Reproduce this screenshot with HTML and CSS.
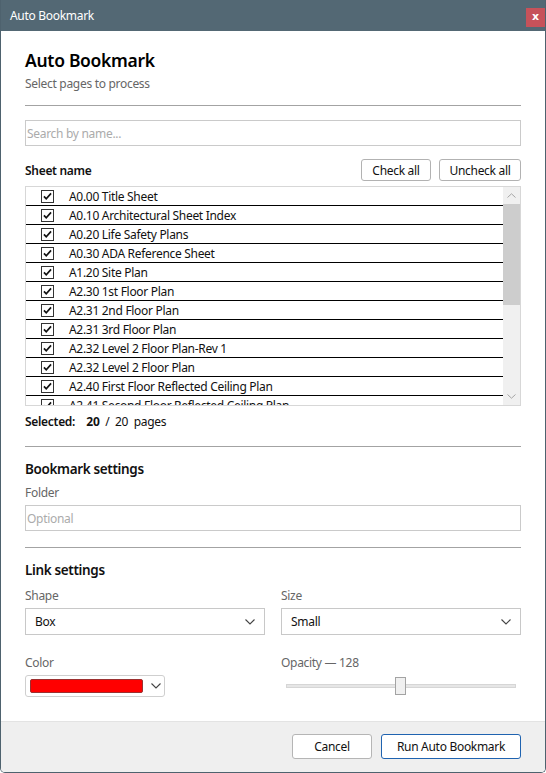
FILE: index.html
```html
<!DOCTYPE html>
<html>
<head>
<meta charset="utf-8">
<title>Auto Bookmark</title>
<link rel="stylesheet" href="styles.css">
</head>
<body>
<div class="window">
  <div class="titlebar">
    <span class="wtitle">Auto Bookmark</span>
    <span class="close">x</span>
  </div>
  <div class="content">
    <h1 class="heading">Auto Bookmark</h1>
    <p class="sub">Select pages to process</p>
    <div class="divider"></div>
    <div class="field search"><span class="ph">Search by name...</span></div>
    <div class="listhead">
      <span class="colname">Sheet name</span>
      <div class="btns">
        <button class="btn btn-check">Check all</button>
        <button class="btn btn-uncheck">Uncheck all</button>
      </div>
    </div>
    <div class="list">
      <div class="rows">
        <div class="row"><span class="cb"><svg viewBox="0 0 13 13" width="11" height="11"><path d="M2.3 6.3 L5 9.2 L10.7 2.8" fill="none" stroke="#111" stroke-width="2"/></svg></span><span>A0.00 Title Sheet</span></div>
        <div class="row"><span class="cb"><svg viewBox="0 0 13 13" width="11" height="11"><path d="M2.3 6.3 L5 9.2 L10.7 2.8" fill="none" stroke="#111" stroke-width="2"/></svg></span><span>A0.10 Architectural Sheet Index</span></div>
        <div class="row"><span class="cb"><svg viewBox="0 0 13 13" width="11" height="11"><path d="M2.3 6.3 L5 9.2 L10.7 2.8" fill="none" stroke="#111" stroke-width="2"/></svg></span><span>A0.20 Life Safety Plans</span></div>
        <div class="row"><span class="cb"><svg viewBox="0 0 13 13" width="11" height="11"><path d="M2.3 6.3 L5 9.2 L10.7 2.8" fill="none" stroke="#111" stroke-width="2"/></svg></span><span>A0.30 ADA Reference Sheet</span></div>
        <div class="row"><span class="cb"><svg viewBox="0 0 13 13" width="11" height="11"><path d="M2.3 6.3 L5 9.2 L10.7 2.8" fill="none" stroke="#111" stroke-width="2"/></svg></span><span>A1.20 Site Plan</span></div>
        <div class="row"><span class="cb"><svg viewBox="0 0 13 13" width="11" height="11"><path d="M2.3 6.3 L5 9.2 L10.7 2.8" fill="none" stroke="#111" stroke-width="2"/></svg></span><span>A2.30 1st Floor Plan</span></div>
        <div class="row"><span class="cb"><svg viewBox="0 0 13 13" width="11" height="11"><path d="M2.3 6.3 L5 9.2 L10.7 2.8" fill="none" stroke="#111" stroke-width="2"/></svg></span><span>A2.31 2nd Floor Plan</span></div>
        <div class="row"><span class="cb"><svg viewBox="0 0 13 13" width="11" height="11"><path d="M2.3 6.3 L5 9.2 L10.7 2.8" fill="none" stroke="#111" stroke-width="2"/></svg></span><span>A2.31 3rd Floor Plan</span></div>
        <div class="row"><span class="cb"><svg viewBox="0 0 13 13" width="11" height="11"><path d="M2.3 6.3 L5 9.2 L10.7 2.8" fill="none" stroke="#111" stroke-width="2"/></svg></span><span>A2.32 Level 2 Floor Plan-Rev 1</span></div>
        <div class="row"><span class="cb"><svg viewBox="0 0 13 13" width="11" height="11"><path d="M2.3 6.3 L5 9.2 L10.7 2.8" fill="none" stroke="#111" stroke-width="2"/></svg></span><span>A2.32 Level 2 Floor Plan</span></div>
        <div class="row"><span class="cb"><svg viewBox="0 0 13 13" width="11" height="11"><path d="M2.3 6.3 L5 9.2 L10.7 2.8" fill="none" stroke="#111" stroke-width="2"/></svg></span><span>A2.40 First Floor Reflected Ceiling Plan</span></div>
        <div class="row"><span class="cb"><svg viewBox="0 0 13 13" width="11" height="11"><path d="M2.3 6.3 L5 9.2 L10.7 2.8" fill="none" stroke="#111" stroke-width="2"/></svg></span><span>A2.41 Second Floor Reflected Ceiling Plan</span></div>
      </div>
      <div class="scrollbar">
        <div class="sb-arrow"><svg viewBox="0 0 9 5" width="9" height="5"><path d="M0.5 4.5 L4.5 0.8 L8.5 4.5" fill="none" stroke="#a6a6a6" stroke-width="1"/></svg></div>
        <div class="sb-thumb"></div>
        <div class="sb-track"></div>
        <div class="sb-arrow"><svg viewBox="0 0 9 5" width="9" height="5"><path d="M0.5 0.5 L4.5 4.2 L8.5 0.5" fill="none" stroke="#a6a6a6" stroke-width="1"/></svg></div>
      </div>
    </div>
    <p class="selected"><span class="sel-label">Selected:</span>&nbsp;&nbsp;&nbsp; <b class="sel-num">20</b>&nbsp; /&nbsp; 20&nbsp; pages</p>
    <div class="divider divider-section"></div>
    <h2 class="section">Bookmark settings</h2>
    <div class="label">Folder</div>
    <div class="field folder"><span class="ph">Optional</span></div>
    <div class="divider divider-section"></div>
    <h2 class="section">Link settings</h2>
    <div class="grid">
      <div class="cell">
        <div class="label label-tight">Shape</div>
        <div class="select"><span>Box</span><svg viewBox="0 0 10 6" width="10" height="6"><path d="M0.5 0.5 L5 5 L9.5 0.5" fill="none" stroke="#444" stroke-width="1.1"/></svg></div>
      </div>
      <div class="cell">
        <div class="label label-tight">Size</div>
        <div class="select"><span>Small</span><svg viewBox="0 0 10 6" width="10" height="6"><path d="M0.5 0.5 L5 5 L9.5 0.5" fill="none" stroke="#444" stroke-width="1.1"/></svg></div>
      </div>
      <div class="cell">
        <div class="label label-tight">Color</div>
        <div class="colorbox"><span class="swatch"></span><svg viewBox="0 0 10 6" width="10" height="6"><path d="M0.5 0.5 L5 5 L9.5 0.5" fill="none" stroke="#444" stroke-width="1.1"/></svg></div>
      </div>
      <div class="cell">
        <div class="label label-tight">Opacity — 128</div>
        <div class="slider"><div class="track"></div><div class="thumb"></div></div>
      </div>
    </div>
  </div>
  <div class="footer">
    <button class="btn fbtn cancel">Cancel</button>
    <button class="btn fbtn run">Run Auto Bookmark</button>
  </div>
</div>
</body>
</html>
```

FILE: styles.css
```css
html, body {
  margin: 0;
  padding: 0;
  background: #ffffff;
}

.window {
  width: 546px;
  height: 773px;
  box-sizing: border-box;
  border: 1px solid #4e626e;
  border-top: 0;
  border-radius: 0 0 5px 5px;
  display: flex;
  flex-direction: column;
  overflow: hidden;
  background: #ffffff;
  font-family: "Noto Sans", "Open Sans", sans-serif;
  font-size: 12px;
  letter-spacing: -0.3px;
  color: #1a1a1a;
}

.titlebar {
  height: 31px;
  flex: none;
  background: #536874;
  display: flex;
  justify-content: space-between;
  align-items: flex-start;
  padding: 0 0 0 9px;
}

.wtitle {
  color: #ffffff;
  font-size: 12px;
  line-height: 16px;
  margin-top: 8px;
}

.close {
  width: 19px;
  height: 19px;
  margin-top: 8px;
  background: #c6525a;
  color: #ffffff;
  font-family: "DejaVu Sans", sans-serif;
  font-weight: bold;
  font-size: 11px;
  letter-spacing: 0;
  line-height: 18px;
  text-align: center;
}

.content {
  flex: 1;
  padding: 17px 24px 0;
}

.heading {
  margin: 0;
  font-size: 17.5px;
  font-weight: 600;
  letter-spacing: -0.3px;
  line-height: 24px;
  color: #000000;
}

.sub {
  margin: 4px 0 0;
  line-height: 16px;
  color: #666666;
}

.divider {
  height: 1px;
  background: #a3a3a3;
  margin-top: 13px;
}

.divider-section {
  margin-top: 16px;
}

.field {
  height: 26px;
  box-sizing: border-box;
  border: 1px solid #cacaca;
  padding: 0 1px;
  display: flex;
  align-items: center;
}

.ph {
  color: #ababab;
}

.search {
  margin-top: 14px;
}

.folder {
  margin-top: 4px;
}

.listhead {
  margin-top: 13px;
  height: 22px;
  display: flex;
  justify-content: space-between;
  align-items: center;
}

.colname {
  font-weight: 600;
  color: #111111;
}

.btns {
  display: flex;
  gap: 8px;
}

.btn {
  height: 22px;
  box-sizing: border-box;
  border: 1px solid #b2b2b2;
  border-radius: 3px;
  background: #ffffff;
  font-family: "Noto Sans", "Open Sans", sans-serif;
  font-size: 12px;
  letter-spacing: -0.3px;
  color: #111111;
  padding: 0;
}

.btn-check {
  width: 70px;
}

.btn-uncheck {
  width: 82px;
}

.list {
  margin-top: 5px;
  height: 220px;
  box-sizing: border-box;
  border: 1px solid #d7d7d7;
  display: flex;
}

.rows {
  flex: 1;
  overflow: hidden;
}

.row {
  height: 19px;
  box-sizing: border-box;
  border-bottom: 1px solid #000000;
  display: flex;
  align-items: center;
  padding-left: 15px;
  color: #111111;
  white-space: nowrap;
}

.cb {
  width: 13px;
  height: 13px;
  box-sizing: border-box;
  border: 1px solid #333333;
  margin-right: 15px;
  display: flex;
  align-items: center;
  justify-content: center;
  flex: none;
}

.scrollbar {
  width: 17px;
  flex: none;
  background: #f0f0f0;
  display: flex;
  flex-direction: column;
}

.sb-arrow {
  height: 17px;
  display: flex;
  align-items: center;
  justify-content: center;
  flex: none;
}

.sb-thumb {
  height: 101px;
  background: #cdcdcd;
  flex: none;
}

.sb-track {
  flex: 1;
}

.selected {
  margin: 8px 0 0;
  line-height: 16px;
  color: #111111;
}

.sel-label {
  font-weight: 600;
}

.sel-num {
  font-weight: 700;
}

.section {
  margin: 12px 0 0;
  font-size: 13.5px;
  font-weight: 600;
  letter-spacing: -0.35px;
  line-height: 20px;
  color: #111111;
}

.label {
  margin-top: 6px;
  line-height: 16px;
  color: #666666;
}

.label-tight {
  margin-top: 0;
}

.grid {
  margin-top: 8px;
  display: grid;
  grid-template-columns: 1fr 1fr;
  column-gap: 16px;
  row-gap: 20px;
}

.select {
  margin-top: 4px;
  height: 27px;
  box-sizing: border-box;
  border: 1px solid #c8c8c8;
  padding: 0 9px 0 9px;
  display: flex;
  justify-content: space-between;
  align-items: center;
  color: #111111;
}

.colorbox {
  margin-top: 4px;
  width: 140px;
  height: 22px;
  box-sizing: border-box;
  border: 1px solid #cfcfcf;
  border-radius: 3px;
  display: flex;
  align-items: center;
  padding-left: 4px;
  gap: 8px;
}

.swatch {
  width: 113px;
  height: 14px;
  box-sizing: border-box;
  background: #ff0000;
  border: 1px solid #9c3030;
  border-radius: 2px;
}

.slider {
  margin-top: 4px;
  height: 22px;
  position: relative;
}

.track {
  position: absolute;
  left: 5px;
  right: 5px;
  top: 9px;
  height: 4px;
  box-sizing: border-box;
  background: #e6e6e6;
  border: 1px solid #d6d6d6;
}

.thumb {
  position: absolute;
  left: 114px;
  top: 2px;
  width: 11px;
  height: 18px;
  box-sizing: border-box;
  background: #f0f0f0;
  border: 1px solid #a3a3a3;
}

.footer {
  height: 51px;
  flex: none;
  box-sizing: border-box;
  border-top: 1px solid #e3e3e3;
  background: #efefef;
  display: flex;
  justify-content: flex-end;
  align-items: flex-start;
  padding: 12px 24px 0;
  gap: 9px;
}

.fbtn {
  height: 25px;
}

.cancel {
  width: 80px;
  border-color: #b5b5b5;
}

.run {
  width: 140px;
  border-color: #1f63b0;
}
```
